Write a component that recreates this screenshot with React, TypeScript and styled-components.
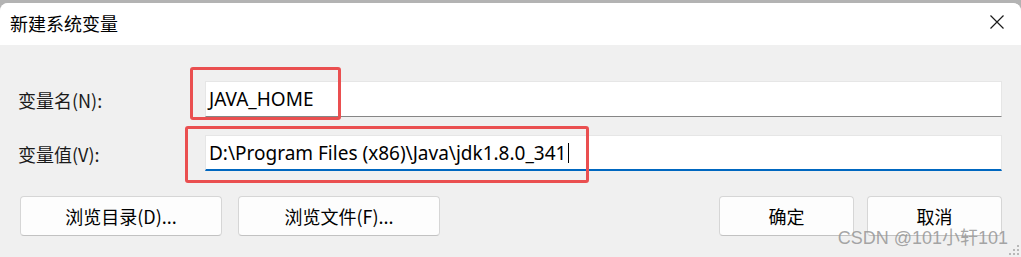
import React from "react";
import styled, { createGlobalStyle } from "styled-components";

const Global = createGlobalStyle`
  html, body { margin: 0; padding: 0; }
  body {
    background: #b3b3b3;
    width: 1021px;
    height: 257px;
    overflow: hidden;
    font-family: "Noto Sans", "Noto Sans CJK SC", sans-serif;
  }
`;

const Window = styled.div`
  position: relative;
  margin-top: 3px;
  width: 1021px;
  height: 254px;
  border-radius: 8px 8px 0 0;
  overflow: hidden;
  background: #f0f0f0;
  display: flex;
  flex-direction: column;
`;

const TitleBar = styled.div`
  height: 42px;
  background: #ffffff;
  display: flex;
  align-items: center;
  justify-content: space-between;
  padding: 0 17px 0 10px;
  flex-shrink: 0;
`;

const Title = styled.div`
  font-family: "Noto Sans CJK SC", sans-serif;
  font-size: 18px;
  color: #000;
  line-height: 1;
  margin-top: -3px;
`;

const CloseButton = styled.div`
  width: 14px;
  height: 14px;
  display: flex;
  margin-top: -4px;
`;

const Body = styled.div`
  padding: 36px 19px 0 18px;
  display: flex;
  flex-direction: column;
`;

const Form = styled.div`
  display: grid;
  grid-template-columns: 187px 797px;
  row-gap: 18px;
  align-items: center;
`;

const Label = styled.div`
  font-family: "Noto Sans CJK SC", sans-serif;
  font-size: 18px;
  color: #1a1a1a;
  line-height: 1;
  padding-top: 2px;
`;

const Field = styled.div`
  position: relative;
`;

const Input = styled.div<{ $focused?: boolean }>`
  height: 36px;
  box-sizing: border-box;
  background: #ffffff;
  border: 1px solid #e6e6e6;
  border-bottom: ${(p) => (p.$focused ? "2px solid #0067c0" : "1px solid #868686")};
  display: flex;
  align-items: center;
  padding-left: 3px;
  font-family: "Noto Sans", "Noto Sans CJK SC", sans-serif;
  font-size: 19px;
  color: #000;
  white-space: nowrap;
`;

const Caret = styled.span`
  display: inline-block;
  width: 1px;
  height: 20px;
  background: #000;
  margin-left: 2px;
`;

const Highlight = styled.div<{ $l: number; $t: number; $w: number; $h: number }>`
  position: absolute;
  left: ${(p) => p.$l}px;
  top: ${(p) => p.$t}px;
  width: ${(p) => p.$w}px;
  height: ${(p) => p.$h}px;
  box-sizing: border-box;
  border: 3px solid #ea4f50;
  border-radius: 3px;
  pointer-events: none;
`;

const ButtonRow = styled.div`
  display: flex;
  justify-content: space-between;
  margin-top: 25px;
  padding-left: 2px;
`;

const ButtonGroup = styled.div<{ $gap: number }>`
  display: flex;
  gap: ${(p) => p.$gap}px;
`;

const Button = styled.div<{ $w: number }>`
  width: ${(p) => p.$w}px;
  height: 40px;
  box-sizing: border-box;
  background: #fdfdfd;
  border: 1px solid #d6d6d6;
  border-bottom-color: #c2c2c2;
  border-radius: 4px;
  display: flex;
  align-items: center;
  justify-content: center;
  font-family: "Noto Sans CJK SC", sans-serif;
  font-size: 18px;
  color: #000;
`;

const Watermark = styled.div`
  position: absolute;
  right: 13px;
  bottom: 8px;
  font-family: "Liberation Sans", "Noto Sans CJK SC", sans-serif;
  font-size: 18px;
  color: rgba(150, 150, 150, 0.85);
  white-space: nowrap;
  pointer-events: none;
`;

const Grip = styled.svg`
  position: absolute;
  right: 1px;
  bottom: 1px;
`;

export default function App() {
  return (
    <>
      <Global />
      <Window>
        <TitleBar>
          <Title>新建系统变量</Title>
          <CloseButton>
            <svg width="14" height="14" viewBox="0 0 14 14">
              <path d="M0.5 0.5 L13.5 13.5 M13.5 0.5 L0.5 13.5" stroke="#1b1b1b" strokeWidth="1.2" fill="none" />
            </svg>
          </CloseButton>
        </TitleBar>
        <Body>
          <Form>
            <Label>变量名(N):</Label>
            <Field>
              <Input>JAVA_HOME</Input>
              <Highlight $l={-15} $t={-14} $w={151} $h={53} />
            </Field>
            <Label>变量值(V):</Label>
            <Field>
              <Input $focused>
                D:\Program Files (x86)\Java\jdk1.8.0_341
                <Caret />
              </Input>
              <Highlight $l={-20} $t={-9} $w={404} $h={57} />
            </Field>
          </Form>
          <ButtonRow>
            <ButtonGroup $gap={16}>
              <Button $w={202}>浏览目录(D)...</Button>
              <Button $w={202}>浏览文件(F)...</Button>
            </ButtonGroup>
            <ButtonGroup $gap={13}>
              <Button $w={135}>确定</Button>
              <Button $w={135}>取消</Button>
            </ButtonGroup>
          </ButtonRow>
        </Body>
        <Watermark>CSDN @101小轩101</Watermark>
        <Grip width="12" height="12" viewBox="0 0 12 12">
          <g fill="#b8b8b8">
            <rect x="9" y="1" width="2" height="2" />
            <rect x="5" y="5" width="2" height="2" />
            <rect x="9" y="5" width="2" height="2" />
            <rect x="1" y="9" width="2" height="2" />
            <rect x="5" y="9" width="2" height="2" />
            <rect x="9" y="9" width="2" height="2" />
          </g>
        </Grip>
      </Window>
    </>
  );
}
